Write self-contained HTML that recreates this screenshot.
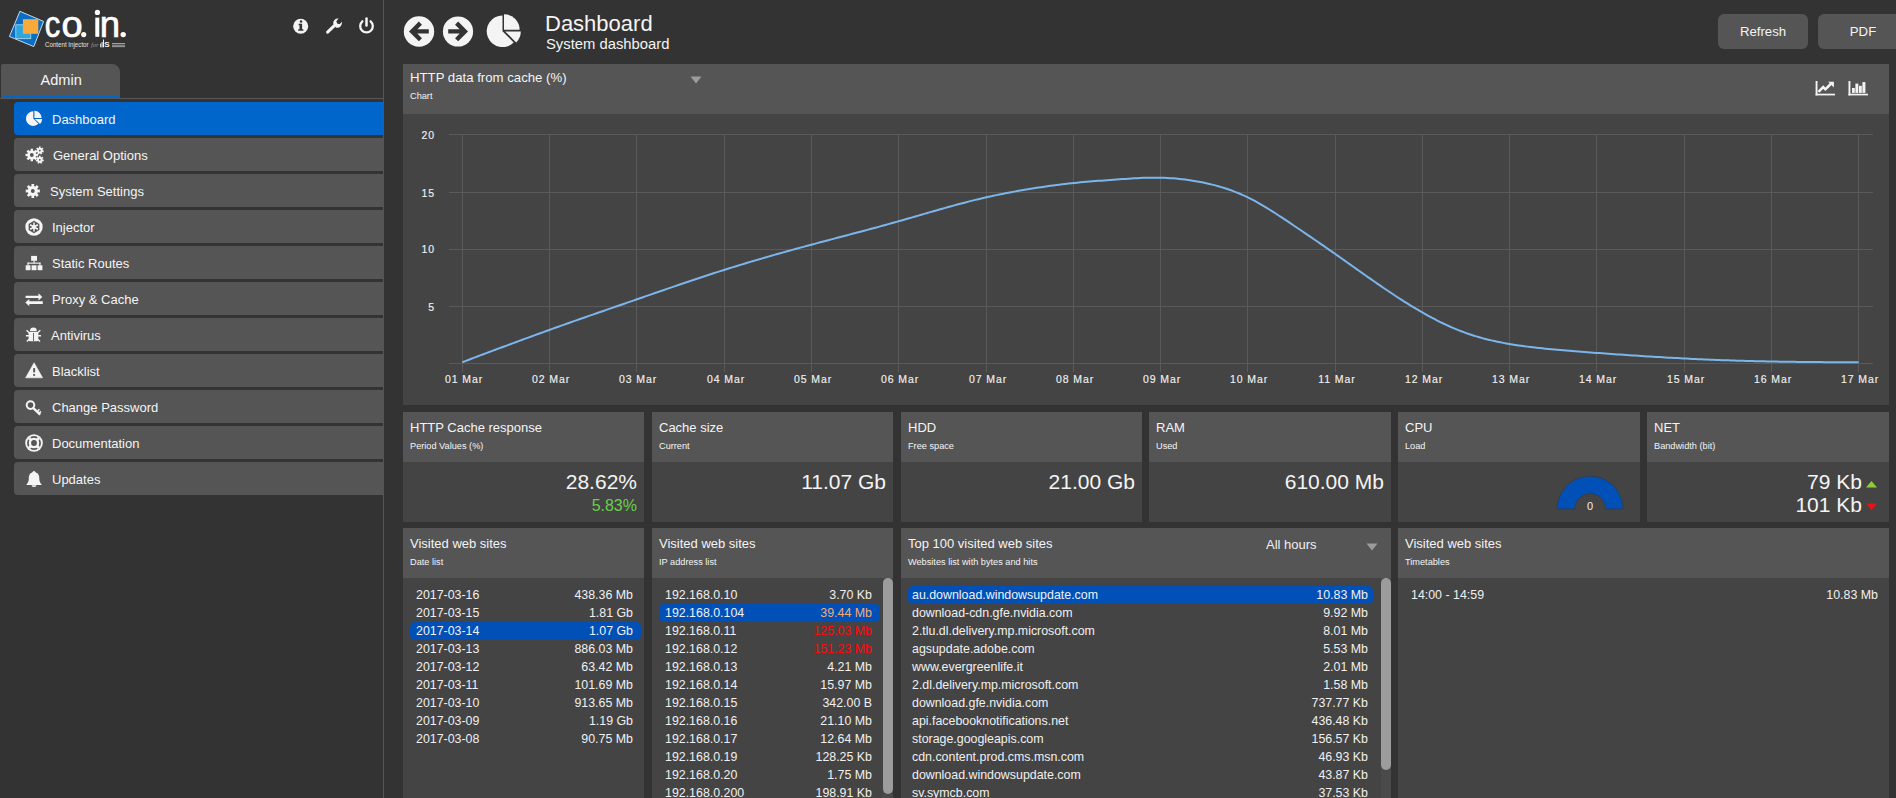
<!DOCTYPE html>
<html><head><meta charset="utf-8">
<style>
*{margin:0;padding:0;box-sizing:border-box}
html,body{width:1896px;height:798px;overflow:hidden;background:#333;font-family:"Liberation Sans",sans-serif;color:#f0f0f0}
.a{position:absolute}
.side{position:absolute;left:0;top:0;width:384px;height:798px;background:#333;border-right:1px solid #555}
.tab{position:absolute;left:1px;top:64px;width:119px;height:34px;background:#555;border-radius:2px 8px 0 0;font-size:14.6px;color:#f4f4f4}
.tab span{position:absolute;left:39.5px;top:8px}
.tab i{position:absolute;left:1px;right:0;bottom:0;height:2px;background:#0066cc;border-radius:2px 2px 0 0}
.hline{position:absolute;left:0;top:98px;width:383px;height:1px;background:#585858}
.mi{position:absolute;left:14px;width:369px;height:33px;background:#555;border-radius:4px 0 0 4px;font-size:13px;color:#f4f4f4}
.mi.on{background:#0066cc}
.mi span{position:absolute;left:38px;top:9.8px;white-space:nowrap}
.mi svg{position:absolute;left:11px;top:8px}
.panel{position:absolute;background:#444}
.ph{position:absolute;left:0;top:0;right:0;background:#555}
.pt{position:absolute;left:7px;top:8px;font-size:13px;color:#f4f4f4;white-space:nowrap}
.ps{position:absolute;left:7px;top:29px;font-size:9.2px;color:#f4f4f4;white-space:nowrap}
.big{position:absolute;right:7px;font-size:21px;color:#f4f4f4;white-space:nowrap}
.row{position:absolute;height:18px;font-size:12.4px;color:#f0f0f0;white-space:nowrap}
.row .l{position:absolute;left:6px;top:2px}
.row .r{position:absolute;right:8px;top:2px}
.row[style*="--x"] .r{right:5px}
.row[style*="--x"] .l{left:4px}
.row.sel{background:#0050b8;border-radius:5px}
.btn{position:absolute;top:14px;height:35px;background:#555;border-radius:6px;font-size:13.2px;color:#f4f4f4}
.btn span{position:absolute;top:10px;left:0;right:0;text-align:center}
.ax{position:absolute;font-size:10.5px;color:#f0f0f0;letter-spacing:0.9px;white-space:nowrap;-webkit-text-stroke:0.15px #f0f0f0}
</style></head><body>

<div class="side">
  <!-- logo -->
  <svg class="a" style="left:0;top:0" width="140" height="60" viewBox="0 0 140 60">
    <defs><clipPath id="sq"><polygon points="19.9,11.3 43.6,21.4 33.8,46.6 9.4,36.5"/></clipPath></defs>
    <polygon points="19.9,11.3 43.6,21.4 33.8,46.6 9.4,36.5" fill="#0a6fc4" stroke="#dfe8f0" stroke-width="0.9"/>
    <g clip-path="url(#sq)">
      <rect x="15.8" y="24.8" width="15" height="13.9" fill="#2ea6dd" stroke="#bfe3f5" stroke-width="0.7"/>
    </g>
    <rect x="22.9" y="19.2" width="15.4" height="14.6" fill="#f9aa3a"/>
    <g font-family="Liberation Sans" font-size="36.5" fill="#fff" stroke="#fff" stroke-width="0.7">
      <text transform="translate(44.8 37) scale(0.85 1)">c</text>
      <text transform="translate(61.4 37) scale(1.04 1)">o</text>
      <text x="99.8" y="37">n</text>
    </g>
    <g fill="#fff"><circle cx="83.7" cy="34.6" r="2.6"/><circle cx="123.2" cy="34.6" r="2.7"/><circle cx="97.4" cy="12.4" r="2.6"/><rect x="95.3" y="17.6" width="4" height="19.2"/></g>
    <text x="45" y="47.3" font-family="Liberation Sans" font-size="6.3" fill="#e4e4e4" textLength="43.6" lengthAdjust="spacingAndGlyphs">Content Injector</text>
    <text x="91" y="47.3" font-family="Liberation Serif" font-style="italic" font-size="6.5" fill="#9a9a9a">for</text>
    <g fill="#f0f0f0"><rect x="100.2" y="43.5" width="1" height="3.8"/><rect x="101.6" y="42" width="1" height="5.3"/><rect x="103" y="39.5" width="1" height="7.8"/></g>
    <text x="104.3" y="47.4" font-family="Liberation Sans" font-weight="bold" font-size="8" fill="#f4f4f4">S</text>
    <g fill="#cfcfcf"><rect x="112" y="43.2" width="13" height="0.7"/><rect x="112" y="44.8" width="13" height="0.7"/><rect x="112" y="46.4" width="13" height="0.7"/></g>
  </svg>
  <!-- top icons -->
  <svg class="a" style="left:280px;top:5px" width="110" height="40" viewBox="280 5 110 40">
    <circle cx="300.7" cy="26.2" r="7.5" fill="#f4f4f4"/>
    <circle cx="301" cy="21.5" r="1.25" fill="#333"/>
    <path d="M298.6 23.7H302.1V29.2H303.4V30.8H298.2V29.2H299.5V25.2H298.6Z" fill="#333"/>
    <path d="M327.6 32.2L334.6 25.4" stroke="#f4f4f4" stroke-width="3" stroke-linecap="round"/>
    <path d="M333.2 23.6A4.6 4.6 0 0 1 338.6 18.6L336.3 21.3 337.2 23.6 339.6 24.3 341.8 21.8A4.6 4.6 0 0 1 335.8 27.4Z" fill="#f4f4f4"/>
    <path d="M362.4 21.3A6.3 6.3 0 1 0 370.6 21.3" fill="none" stroke="#f4f4f4" stroke-width="2.3" stroke-linecap="round"/>
    <path d="M366.5 18.6V25.4" stroke="#f4f4f4" stroke-width="2.5" stroke-linecap="round"/>
  </svg>

  <div class="tab"><span>Admin</span><i></i></div>
  <div class="hline"></div>

  <div class="mi on" style="top:102px"><span>Dashboard</span></div>
  <div class="mi" style="top:138px"><span style="left:39px">General Options</span></div>
  <div class="mi" style="top:174px"><span style="left:36px">System Settings</span></div>
  <div class="mi" style="top:210px"><span>Injector</span></div>
  <div class="mi" style="top:246px"><span>Static Routes</span></div>
  <div class="mi" style="top:282px"><span>Proxy &amp; Cache</span></div>
  <div class="mi" style="top:318px"><span style="left:37px">Antivirus</span></div>
  <div class="mi" style="top:354px"><span>Blacklist</span></div>
  <div class="mi" style="top:390px"><span>Change Password</span></div>
  <div class="mi" style="top:426px"><span>Documentation</span></div>
  <div class="mi" style="top:462px"><span>Updates</span></div>
  <svg class="a" style="left:0;top:0" width="384" height="500" viewBox="0 0 384 500"><path d="M33.30 118.60 V111.30 A7.30 7.30 0 1 0 38.46 123.76 Z M34.40 118.05 V110.75 A7.30 7.30 0 0 1 41.70 118.05 Z M34.84 118.93 H42.14 A7.30 7.30 0 0 1 40.00 124.09 Z" fill="#f4f4f4"/><path fill-rule="evenodd" d="M30.04 150.75 L30.69 150.54 L30.55 148.72 L33.05 148.72 L32.91 150.54 L33.56 150.75 L34.17 151.06 L35.36 149.68 L37.12 151.44 L35.74 152.63 L36.05 153.24 L36.26 153.89 L38.08 153.75 L38.08 156.25 L36.26 156.11 L36.05 156.76 L35.74 157.37 L37.12 158.56 L35.36 160.32 L34.17 158.94 L33.56 159.25 L32.91 159.46 L33.05 161.28 L30.55 161.28 L30.69 159.46 L30.04 159.25 L29.43 158.94 L28.24 160.32 L26.48 158.56 L27.86 157.37 L27.55 156.76 L27.34 156.11 L25.52 156.25 L25.52 153.75 L27.34 153.89 L27.55 153.24 L27.86 152.63 L26.48 151.44 L28.24 149.68 L29.43 151.06Z M29.90 155.00 a1.90 1.90 0 1 0 3.80 0 a1.90 1.90 0 1 0 -3.80 0Z" fill="#f4f4f4"/><path fill-rule="evenodd" d="M38.54 147.99 L39.00 147.81 L38.89 146.60 L40.71 146.60 L40.60 147.81 L41.06 147.99 L41.48 148.24 L42.36 147.39 L43.49 148.82 L42.48 149.48 L42.63 149.95 L42.70 150.44 L43.90 150.60 L43.49 152.38 L42.34 152.00 L42.07 152.41 L41.73 152.77 L42.36 153.81 L40.71 154.60 L40.29 153.46 L39.80 153.50 L39.31 153.46 L38.89 154.60 L37.24 153.81 L37.87 152.77 L37.53 152.41 L37.26 152.00 L36.11 152.38 L35.70 150.60 L36.90 150.44 L36.97 149.95 L37.12 149.48 L36.11 148.82 L37.24 147.39 L38.12 148.24Z M38.90 150.60 a0.90 0.90 0 1 0 1.80 0 a0.90 0.90 0 1 0 -1.80 0Z" fill="#f4f4f4"/><path fill-rule="evenodd" d="M38.54 157.19 L39.00 157.01 L38.89 155.80 L40.71 155.80 L40.60 157.01 L41.06 157.19 L41.48 157.44 L42.36 156.59 L43.49 158.02 L42.48 158.68 L42.63 159.15 L42.70 159.64 L43.90 159.80 L43.49 161.58 L42.34 161.20 L42.07 161.61 L41.73 161.97 L42.36 163.01 L40.71 163.80 L40.29 162.66 L39.80 162.70 L39.31 162.66 L38.89 163.80 L37.24 163.01 L37.87 161.97 L37.53 161.61 L37.26 161.20 L36.11 161.58 L35.70 159.80 L36.90 159.64 L36.97 159.15 L37.12 158.68 L36.11 158.02 L37.24 156.59 L38.12 157.44Z M38.90 159.80 a0.90 0.90 0 1 0 1.80 0 a0.90 0.90 0 1 0 -1.80 0Z" fill="#f4f4f4"/><path fill-rule="evenodd" d="M30.81 186.20 L31.55 185.95 L31.40 183.94 L34.20 183.94 L34.05 185.95 L34.79 186.20 L35.48 186.55 L36.80 185.01 L38.79 187.00 L37.25 188.32 L37.60 189.01 L37.85 189.75 L39.86 189.60 L39.86 192.40 L37.85 192.25 L37.60 192.99 L37.25 193.68 L38.79 195.00 L36.80 196.99 L35.48 195.45 L34.79 195.80 L34.05 196.05 L34.20 198.06 L31.40 198.06 L31.55 196.05 L30.81 195.80 L30.12 195.45 L28.80 196.99 L26.81 195.00 L28.35 193.68 L28.00 192.99 L27.75 192.25 L25.74 192.40 L25.74 189.60 L27.75 189.75 L28.00 189.01 L28.35 188.32 L26.81 187.00 L28.80 185.01 L30.12 186.55Z M30.90 191.00 a1.90 1.90 0 1 0 3.80 0 a1.90 1.90 0 1 0 -3.80 0Z" fill="#f4f4f4"/><circle cx="34" cy="227" r="8.7" fill="#f4f4f4"/><polygon points="34.00,233.20 28.63,230.10 28.63,223.90 34.00,220.80 39.37,223.90 39.37,230.10" fill="#555"/><g stroke="#f4f4f4" stroke-width="1.5"><path d="M34 222.50v9M30.10 224.75l7.8 4.5M30.10 229.25l7.8 -4.5"/></g><circle cx="34" cy="227" r="1.9" fill="#f4f4f4"/><g fill="#f4f4f4"><rect x="31.1" y="255.9" width="5.9" height="4.9"/><rect x="33.5" y="260.5" width="1.1" height="3"/><rect x="27.5" y="262.6" width="13" height="1.1"/><rect x="27.5" y="262.6" width="1.1" height="3"/><rect x="39.4" y="262.6" width="1.1" height="3"/><rect x="25.7" y="265.3" width="4.8" height="4.9"/><rect x="31.6" y="265.3" width="4.9" height="4.9"/><rect x="37.6" y="265.3" width="4.8" height="4.9"/></g><g fill="#f4f4f4"><path d="M25.6 295.8H38.5V293.3L42.3 296.9 38.5 300.5V298.1H25.6z"/><path d="M42.8 301.3H29.3V298.9L25.3 302.6 29.3 306.2V303.9H42.8z"/></g><g fill="#f4f4f4"><path d="M30 331A3.4 3.4 0 0 1 36.8 331z"/><rect x="28.6" y="331.8" width="9.7" height="9.5" rx="1.5"/></g><rect x="33" y="333" width="0.9" height="8" fill="#555"/><g stroke="#f4f4f4" stroke-width="1.4" fill="none"><path d="M26.5 330.2L29.5 333M40.3 330.2L37.3 333M25.9 335.8H29M41 335.8H37.9M26.8 341.5L29.5 339M40 341.5L37.3 339"/></g><path d="M34.1 362.8L42.6 377.8H25.6z" fill="#f4f4f4" stroke="#f4f4f4" stroke-width="0.6" stroke-linejoin="round"/><rect x="33.2" y="368.1" width="1.9" height="4.3" fill="#555"/><rect x="33.2" y="374" width="1.9" height="1.8" fill="#555"/><circle cx="30.5" cy="405.1" r="3.8" fill="none" stroke="#f4f4f4" stroke-width="2"/><path d="M32.8 407.6L40.2 414.6" stroke="#f4f4f4" stroke-width="2.4"/><path d="M37.2 411.5l2.2-2.2M39 413.3l1.9-1.9" stroke="#f4f4f4" stroke-width="1.6"/><circle cx="34" cy="443" r="8.8" fill="#f4f4f4"/><circle cx="34" cy="443" r="6.1" fill="none" stroke="#555" stroke-width="1.7"/><path d="M29 438l10 10M39 438l-10 10" stroke="#f4f4f4" stroke-width="3"/><circle cx="34" cy="443" r="2.9" fill="#555"/><path d="M34 470.9C35.2 470.9 35.6 472 35.9 472.6 38.5 473.4 39.3 475.6 39.3 478.5 39.3 481.5 40.2 483 41.9 484.9H26.2C27.9 483 28.8 481.5 28.8 478.5 28.8 475.6 29.6 473.4 32.1 472.6 32.4 472 32.8 470.9 34 470.9z" fill="#f4f4f4"/><path d="M31.5 485.2A2.6 2.6 0 0 0 36.5 485.2z" fill="#f4f4f4"/></svg>
</div>

<!-- MAIN -->
<div id="main">
<!-- header -->
<svg class="a" style="left:400px;top:10px" width="130" height="42" viewBox="400 10 130 42">
<circle cx="419" cy="31.5" r="15.2" fill="#f4f4f4"/>
<path d="M420.4 23.1L412.1 31.4 420.4 39.7M412.5 31.4H428.8" fill="none" stroke="#333" stroke-width="4.4" stroke-linejoin="miter"/>
<circle cx="458" cy="31.5" r="15.1" fill="#f4f4f4"/>
<path d="M456.6 23.1L464.9 31.4 456.6 39.7M464.5 31.4H448.2" fill="none" stroke="#333" stroke-width="4.4" stroke-linejoin="miter"/>
<path d="M502.50 31.30 V15.50 A15.80 15.80 0 1 0 513.67 42.47 Z" fill="#f4f4f4"/><path d="M504 29.8 V14.2 A15.6 15.6 0 0 1 519.6 29.8 Z" fill="#f4f4f4"/><path d="M505.2 31.4 H520.8 A15.6 15.6 0 0 1 516.2 42.4 Z" fill="#f4f4f4"/>
</svg>
<div class="a" style="left:545px;top:11px;font-size:22px;color:#f4f4f4">Dashboard</div>
<div class="a" style="left:546px;top:35.7px;font-size:14.8px;color:#f4f4f4">System dashboard</div>
<div class="btn" style="left:1718px;width:90px"><span>Refresh</span></div>
<div class="btn" style="left:1818px;width:90px"><span>PDF</span></div>

<!-- chart panel -->
<div class="panel" style="left:403px;top:64px;width:486px;height:341px;width:1486px">
  <div class="ph" style="height:50px"></div>
  <div class="pt" style="top:5.5px;font-size:13.2px">HTTP data from cache (%)</div>
  <div class="ps" style="top:27px">Chart</div>
  <svg class="a" style="left:287px;top:11.8px" width="12" height="8" viewBox="0 0 12 8"><path d="M0.5 .5h11L6 7.5z" fill="#9c9c9c"/></svg>
  <svg class="a" style="left:0;top:0" width="1486" height="50" viewBox="0 0 1486 50"><g fill="#f4f4f4">
<rect x="1412.6" y="17" width="1.9" height="14.4"/><rect x="1412.6" y="29.7" width="19.4" height="1.7"/>
<path d="M1415.4 27.9L1420.2 23.1 1422.4 25.3 1427.7 20" fill="none" stroke="#f4f4f4" stroke-width="2.5"/>
<path d="M1425.2 17.8H1430.9V23.5Z"/>
<rect x="1445.5" y="17" width="1.9" height="14.4"/><rect x="1445.5" y="29.7" width="19.5" height="1.7"/>
<rect x="1449" y="24" width="2.8" height="4.9"/><rect x="1452.4" y="19.6" width="2.9" height="9.3"/><rect x="1456" y="21.8" width="2.8" height="7.1"/><rect x="1459.4" y="18.1" width="3" height="10.8"/>
</g></svg>
</div>
<svg class="a" style="left:0;top:0" width="1896" height="420" viewBox="0 0 1896 420">
  <g stroke="#5a5a5a" stroke-width="1" fill="none"><path d="M449 134.5H1873" /><path d="M449 192.5H1873" /><path d="M449 249.5H1873" /><path d="M449 306.5H1873" /><path d="M449 363.5H1873" /><path d="M462.5 134V372" /><path d="M549.5 134V372" /><path d="M636.5 134V372" /><path d="M724.5 134V372" /><path d="M811.5 134V372" /><path d="M898.5 134V372" /><path d="M986.5 134V372" /><path d="M1073.5 134V372" /><path d="M1160.5 134V372" /><path d="M1247.5 134V372" /><path d="M1335.5 134V372" /><path d="M1422.5 134V372" /><path d="M1509.5 134V372" /><path d="M1596.5 134V372" /><path d="M1684.5 134V372" /><path d="M1771.5 134V372" /><path d="M1858.5 134V372" /></g>
  <path d="M462.3 362.20 L465.3 361.07 L468.3 359.94 L471.3 358.81 L474.3 357.68 L477.3 356.56 L480.3 355.43 L483.3 354.30 L486.3 353.17 L489.3 352.05 L492.3 350.93 L495.3 349.80 L498.3 348.68 L501.3 347.56 L504.3 346.44 L507.3 345.33 L510.3 344.21 L513.3 343.10 L516.3 341.99 L519.3 340.88 L522.3 339.77 L525.3 338.67 L528.3 337.57 L531.3 336.47 L534.3 335.37 L537.3 334.28 L540.3 333.19 L543.3 332.10 L546.3 331.02 L549.3 329.94 L552.3 328.86 L555.3 327.79 L558.3 326.71 L561.3 325.65 L564.3 324.58 L567.3 323.52 L570.3 322.46 L573.3 321.41 L576.3 320.35 L579.3 319.30 L582.3 318.25 L585.3 317.20 L588.3 316.16 L591.3 315.11 L594.3 314.07 L597.3 313.03 L600.3 311.99 L603.3 310.95 L606.3 309.91 L609.3 308.87 L612.3 307.83 L615.3 306.80 L618.3 305.76 L621.3 304.72 L624.3 303.69 L627.3 302.65 L630.3 301.61 L633.3 300.58 L636.3 299.54 L639.3 298.50 L642.3 297.46 L645.3 296.42 L648.3 295.38 L651.3 294.34 L654.3 293.31 L657.3 292.27 L660.3 291.23 L663.3 290.20 L666.3 289.17 L669.3 288.13 L672.3 287.10 L675.3 286.08 L678.3 285.05 L681.3 284.03 L684.3 283.01 L687.3 282.00 L690.3 280.99 L693.3 279.98 L696.3 278.98 L699.3 277.98 L702.3 276.98 L705.3 276.00 L708.3 275.01 L711.3 274.03 L714.3 273.06 L717.3 272.09 L720.3 271.13 L723.3 270.18 L726.3 269.23 L729.3 268.29 L732.3 267.36 L735.3 266.43 L738.3 265.51 L741.3 264.60 L744.3 263.69 L747.3 262.79 L750.3 261.89 L753.3 261.00 L756.3 260.11 L759.3 259.23 L762.3 258.36 L765.3 257.49 L768.3 256.62 L771.3 255.77 L774.3 254.91 L777.3 254.06 L780.3 253.22 L783.3 252.37 L786.3 251.54 L789.3 250.70 L792.3 249.87 L795.3 249.05 L798.3 248.23 L801.3 247.41 L804.3 246.60 L807.3 245.78 L810.3 244.98 L813.3 244.17 L816.3 243.37 L819.3 242.57 L822.3 241.77 L825.3 240.97 L828.3 240.18 L831.3 239.39 L834.3 238.60 L837.3 237.80 L840.3 237.01 L843.3 236.22 L846.3 235.43 L849.3 234.64 L852.3 233.84 L855.3 233.05 L858.3 232.25 L861.3 231.46 L864.3 230.66 L867.3 229.86 L870.3 229.05 L873.3 228.24 L876.3 227.43 L879.3 226.62 L882.3 225.80 L885.3 224.98 L888.3 224.15 L891.3 223.32 L894.3 222.48 L897.3 221.64 L900.3 220.79 L903.3 219.94 L906.3 219.08 L909.3 218.22 L912.3 217.35 L915.3 216.48 L918.3 215.62 L921.3 214.75 L924.3 213.88 L927.3 213.01 L930.3 212.14 L933.3 211.28 L936.3 210.42 L939.3 209.56 L942.3 208.71 L945.3 207.86 L948.3 207.03 L951.3 206.19 L954.3 205.37 L957.3 204.55 L960.3 203.75 L963.3 202.95 L966.3 202.17 L969.3 201.40 L972.3 200.64 L975.3 199.90 L978.3 199.17 L981.3 198.45 L984.3 197.75 L987.3 197.07 L990.3 196.40 L993.3 195.76 L996.3 195.12 L999.3 194.50 L1002.3 193.90 L1005.3 193.31 L1008.3 192.73 L1011.3 192.17 L1014.3 191.62 L1017.3 191.08 L1020.3 190.55 L1023.3 190.04 L1026.3 189.53 L1029.3 189.03 L1032.3 188.55 L1035.3 188.07 L1038.3 187.60 L1041.3 187.14 L1044.3 186.70 L1047.3 186.26 L1050.3 185.84 L1053.3 185.43 L1056.3 185.03 L1059.3 184.64 L1062.3 184.27 L1065.3 183.91 L1068.3 183.57 L1071.3 183.24 L1074.3 182.93 L1077.3 182.63 L1080.3 182.35 L1083.3 182.08 L1086.3 181.82 L1089.3 181.57 L1092.3 181.32 L1095.3 181.09 L1098.3 180.86 L1101.3 180.64 L1104.3 180.42 L1107.3 180.20 L1110.3 179.98 L1113.3 179.76 L1116.3 179.53 L1119.3 179.31 L1122.3 179.09 L1125.3 178.88 L1128.3 178.68 L1131.3 178.48 L1134.3 178.31 L1137.3 178.14 L1140.3 178.00 L1143.3 177.87 L1146.3 177.78 L1149.3 177.70 L1152.3 177.66 L1155.3 177.65 L1158.3 177.67 L1161.3 177.73 L1164.3 177.82 L1167.3 177.96 L1170.3 178.13 L1173.3 178.34 L1176.3 178.59 L1179.3 178.88 L1182.3 179.21 L1185.3 179.57 L1188.3 179.98 L1191.3 180.42 L1194.3 180.90 L1197.3 181.42 L1200.3 181.98 L1203.3 182.58 L1206.3 183.22 L1209.3 183.90 L1212.3 184.63 L1215.3 185.40 L1218.3 186.22 L1221.3 187.09 L1224.3 188.02 L1227.3 189.00 L1230.3 190.04 L1233.3 191.14 L1236.3 192.31 L1239.3 193.54 L1242.3 194.84 L1245.3 196.20 L1248.3 197.64 L1251.3 199.15 L1254.3 200.73 L1257.3 202.38 L1260.3 204.08 L1263.3 205.83 L1266.3 207.64 L1269.3 209.48 L1272.3 211.37 L1275.3 213.28 L1278.3 215.23 L1281.3 217.20 L1284.3 219.19 L1287.3 221.19 L1290.3 223.20 L1293.3 225.22 L1296.3 227.24 L1299.3 229.26 L1302.3 231.29 L1305.3 233.33 L1308.3 235.37 L1311.3 237.41 L1314.3 239.47 L1317.3 241.52 L1320.3 243.59 L1323.3 245.66 L1326.3 247.74 L1329.3 249.82 L1332.3 251.92 L1335.3 254.02 L1338.3 256.13 L1341.3 258.24 L1344.3 260.36 L1347.3 262.49 L1350.3 264.62 L1353.3 266.74 L1356.3 268.87 L1359.3 270.99 L1362.3 273.11 L1365.3 275.23 L1368.3 277.34 L1371.3 279.44 L1374.3 281.53 L1377.3 283.61 L1380.3 285.67 L1383.3 287.73 L1386.3 289.76 L1389.3 291.78 L1392.3 293.78 L1395.3 295.76 L1398.3 297.72 L1401.3 299.66 L1404.3 301.57 L1407.3 303.45 L1410.3 305.31 L1413.3 307.14 L1416.3 308.93 L1419.3 310.70 L1422.3 312.43 L1425.3 314.12 L1428.3 315.78 L1431.3 317.41 L1434.3 318.99 L1437.3 320.53 L1440.3 322.03 L1443.3 323.49 L1446.3 324.91 L1449.3 326.28 L1452.3 327.60 L1455.3 328.88 L1458.3 330.11 L1461.3 331.28 L1464.3 332.41 L1467.3 333.48 L1470.3 334.50 L1473.3 335.48 L1476.3 336.40 L1479.3 337.28 L1482.3 338.12 L1485.3 338.91 L1488.3 339.66 L1491.3 340.38 L1494.3 341.06 L1497.3 341.70 L1500.3 342.31 L1503.3 342.89 L1506.3 343.44 L1509.3 343.97 L1512.3 344.47 L1515.3 344.94 L1518.3 345.39 L1521.3 345.82 L1524.3 346.23 L1527.3 346.63 L1530.3 347.00 L1533.3 347.36 L1536.3 347.70 L1539.3 348.03 L1542.3 348.34 L1545.3 348.65 L1548.3 348.94 L1551.3 349.22 L1554.3 349.50 L1557.3 349.76 L1560.3 350.03 L1563.3 350.28 L1566.3 350.54 L1569.3 350.79 L1572.3 351.03 L1575.3 351.27 L1578.3 351.51 L1581.3 351.75 L1584.3 351.98 L1587.3 352.21 L1590.3 352.44 L1593.3 352.66 L1596.3 352.89 L1599.3 353.11 L1602.3 353.33 L1605.3 353.55 L1608.3 353.76 L1611.3 353.98 L1614.3 354.19 L1617.3 354.40 L1620.3 354.61 L1623.3 354.82 L1626.3 355.02 L1629.3 355.22 L1632.3 355.42 L1635.3 355.62 L1638.3 355.82 L1641.3 356.01 L1644.3 356.20 L1647.3 356.39 L1650.3 356.58 L1653.3 356.76 L1656.3 356.94 L1659.3 357.12 L1662.3 357.29 L1665.3 357.47 L1668.3 357.63 L1671.3 357.80 L1674.3 357.96 L1677.3 358.12 L1680.3 358.28 L1683.3 358.43 L1686.3 358.58 L1689.3 358.73 L1692.3 358.88 L1695.3 359.02 L1698.3 359.15 L1701.3 359.29 L1704.3 359.42 L1707.3 359.55 L1710.3 359.67 L1713.3 359.79 L1716.3 359.91 L1719.3 360.02 L1722.3 360.14 L1725.3 360.24 L1728.3 360.35 L1731.3 360.45 L1734.3 360.55 L1737.3 360.65 L1740.3 360.74 L1743.3 360.83 L1746.3 360.91 L1749.3 360.99 L1752.3 361.07 L1755.3 361.15 L1758.3 361.22 L1761.3 361.29 L1764.3 361.36 L1767.3 361.42 L1770.3 361.48 L1773.3 361.54 L1776.3 361.60 L1779.3 361.65 L1782.3 361.70 L1785.3 361.74 L1788.3 361.78 L1791.3 361.82 L1794.3 361.86 L1797.3 361.90 L1800.3 361.93 L1803.3 361.96 L1806.3 361.99 L1809.3 362.02 L1812.3 362.05 L1815.3 362.07 L1818.3 362.09 L1821.3 362.11 L1824.3 362.13 L1827.3 362.15 L1830.3 362.17 L1833.3 362.19 L1836.3 362.20 L1839.3 362.22 L1842.3 362.23 L1845.3 362.24 L1848.3 362.26 L1851.3 362.27 L1854.3 362.28 L1857.3 362.29 L1858.7 362.30" fill="none" stroke="#7cb5ec" stroke-width="2"/>
</svg>
<div class="ax" style="left:434.0px;top:373px;width:60px;text-align:center">01 Mar</div><div class="ax" style="left:521.0px;top:373px;width:60px;text-align:center">02 Mar</div><div class="ax" style="left:608.0px;top:373px;width:60px;text-align:center">03 Mar</div><div class="ax" style="left:696.0px;top:373px;width:60px;text-align:center">04 Mar</div><div class="ax" style="left:783.0px;top:373px;width:60px;text-align:center">05 Mar</div><div class="ax" style="left:870.0px;top:373px;width:60px;text-align:center">06 Mar</div><div class="ax" style="left:958.0px;top:373px;width:60px;text-align:center">07 Mar</div><div class="ax" style="left:1045.0px;top:373px;width:60px;text-align:center">08 Mar</div><div class="ax" style="left:1132.0px;top:373px;width:60px;text-align:center">09 Mar</div><div class="ax" style="left:1219.0px;top:373px;width:60px;text-align:center">10 Mar</div><div class="ax" style="left:1307.0px;top:373px;width:60px;text-align:center">11 Mar</div><div class="ax" style="left:1394.0px;top:373px;width:60px;text-align:center">12 Mar</div><div class="ax" style="left:1481.0px;top:373px;width:60px;text-align:center">13 Mar</div><div class="ax" style="left:1568.0px;top:373px;width:60px;text-align:center">14 Mar</div><div class="ax" style="left:1656.0px;top:373px;width:60px;text-align:center">15 Mar</div><div class="ax" style="left:1743.0px;top:373px;width:60px;text-align:center">16 Mar</div><div class="ax" style="left:1830.0px;top:373px;width:60px;text-align:center">17 Mar</div><div class="ax" style="left:400px;top:129.0px;width:35px;text-align:right">20</div><div class="ax" style="left:400px;top:187.0px;width:35px;text-align:right">15</div><div class="ax" style="left:400px;top:243.0px;width:35px;text-align:right">10</div><div class="ax" style="left:400px;top:301.0px;width:35px;text-align:right">5</div>

<div class="panel" style="left:403px;top:412px;width:241px;height:110px"><div class="ph" style="height:50px"></div><div class="pt">HTTP Cache response</div><div class="ps">Period Values (%)</div><div class="big" style="top:58px">28.62%</div><div class="big" style="top:84.5px;font-size:16px;color:#6ad04a">5.83%</div></div>
<div class="panel" style="left:652px;top:412px;width:241px;height:110px"><div class="ph" style="height:50px"></div><div class="pt">Cache size</div><div class="ps">Current</div><div class="big" style="top:58px">11.07 Gb</div></div>
<div class="panel" style="left:901px;top:412px;width:241px;height:110px"><div class="ph" style="height:50px"></div><div class="pt">HDD</div><div class="ps">Free space</div><div class="big" style="top:58px">21.00 Gb</div></div>
<div class="panel" style="left:1149px;top:412px;width:242px;height:110px"><div class="ph" style="height:50px"></div><div class="pt">RAM</div><div class="ps">Used</div><div class="big" style="top:58px">610.00 Mb</div></div>
<div class="panel" style="left:1398px;top:412px;width:242px;height:110px"><div class="ph" style="height:50px"></div><div class="pt">CPU</div><div class="ps">Load</div><svg class="a" style="left:158px;top:63px" width="68" height="35" viewBox="0 0 68 35"><path d="M1 34A33 33 0 0 1 67 34H49.3A15.3 15.3 0 0 0 18.7 34z" fill="#0050b8" stroke="#3a3a3a" stroke-width="0.8"/></svg><div class="a" style="left:186px;top:88px;font-size:11px;width:12px;text-align:center">0</div></div>
<div class="panel" style="left:1647px;top:412px;width:242px;height:110px"><div class="ph" style="height:50px"></div><div class="pt">NET</div><div class="ps">Bandwidth (bit)</div><div class="big" style="top:58px;right:27px">79 Kb</div><div class="big" style="top:80.5px;right:27px">101 Kb</div><svg class="a" style="left:219px;top:69px" width="11" height="7" viewBox="0 0 11 7"><path d="M5.5 0L11 6.5H0z" fill="#8fcc3a"/></svg><svg class="a" style="left:219px;top:91px" width="11" height="7" viewBox="0 0 11 7"><path d="M0 .5h11L5.5 7z" fill="#ee1111"/></svg></div>
<div class="panel" style="left:403px;top:528px;width:241px;height:280px"><div class="ph" style="height:50px"></div><div class="pt">Visited web sites</div><div class="ps">Date list</div><div class="row" style="left:7px;width:231px;top:58px"><span class="l">2017-03-16</span><span class="r">438.36 Mb</span></div><div class="row" style="left:7px;width:231px;top:76px"><span class="l">2017-03-15</span><span class="r">1.81 Gb</span></div><div class="row sel" style="left:7px;width:231px;top:94px"><span class="l">2017-03-14</span><span class="r">1.07 Gb</span></div><div class="row" style="left:7px;width:231px;top:112px"><span class="l">2017-03-13</span><span class="r">886.03 Mb</span></div><div class="row" style="left:7px;width:231px;top:130px"><span class="l">2017-03-12</span><span class="r">63.42 Mb</span></div><div class="row" style="left:7px;width:231px;top:148px"><span class="l">2017-03-11</span><span class="r">101.69 Mb</span></div><div class="row" style="left:7px;width:231px;top:166px"><span class="l">2017-03-10</span><span class="r">913.65 Mb</span></div><div class="row" style="left:7px;width:231px;top:184px"><span class="l">2017-03-09</span><span class="r">1.19 Gb</span></div><div class="row" style="left:7px;width:231px;top:202px"><span class="l">2017-03-08</span><span class="r">90.75 Mb</span></div></div>
<div class="panel" style="left:652px;top:528px;width:241px;height:280px"><div class="ph" style="height:50px"></div><div class="pt">Visited web sites</div><div class="ps">IP address list</div><div class="row" style="left:7px;width:221px;top:58px"><span class="l">192.168.0.10</span><span class="r">3.70 Kb</span></div><div class="row sel" style="left:7px;width:221px;top:76px"><span class="l">192.168.0.104</span><span class="r" style=color:#f2ac74>39.44 Mb</span></div><div class="row" style="left:7px;width:221px;top:94px"><span class="l">192.168.0.11</span><span class="r" style=color:#ff0a0a>125.03 Mb</span></div><div class="row" style="left:7px;width:221px;top:112px"><span class="l">192.168.0.12</span><span class="r" style=color:#ff0a0a>151.23 Mb</span></div><div class="row" style="left:7px;width:221px;top:130px"><span class="l">192.168.0.13</span><span class="r">4.21 Mb</span></div><div class="row" style="left:7px;width:221px;top:148px"><span class="l">192.168.0.14</span><span class="r">15.97 Mb</span></div><div class="row" style="left:7px;width:221px;top:166px"><span class="l">192.168.0.15</span><span class="r">342.00 B</span></div><div class="row" style="left:7px;width:221px;top:184px"><span class="l">192.168.0.16</span><span class="r">21.10 Mb</span></div><div class="row" style="left:7px;width:221px;top:202px"><span class="l">192.168.0.17</span><span class="r">12.64 Mb</span></div><div class="row" style="left:7px;width:221px;top:220px"><span class="l">192.168.0.19</span><span class="r">128.25 Kb</span></div><div class="row" style="left:7px;width:221px;top:238px"><span class="l">192.168.0.20</span><span class="r">1.75 Mb</span></div><div class="row" style="left:7px;width:221px;top:256px"><span class="l">192.168.0.200</span><span class="r">198.91 Kb</span></div><div class="a" style="left:231px;top:50px;width:10px;height:230px;background:#4a4a4a"></div><div class="a" style="left:231px;top:50px;width:10px;height:216px;background:#9c9c9c;border-radius:5px"></div></div>
<div class="panel" style="left:901px;top:528px;width:490px;height:280px"><div class="ph" style="height:50px"></div><div class="pt">Top 100 visited web sites</div><div class="ps">Websites list with bytes and hits</div><div class="row sel" style="--x:0;left:7px;width:465px;top:58px"><span class="l">au.download.windowsupdate.com</span><span class="r">10.83 Mb</span></div><div class="row" style="--x:0;left:7px;width:465px;top:76px"><span class="l">download-cdn.gfe.nvidia.com</span><span class="r">9.92 Mb</span></div><div class="row" style="--x:0;left:7px;width:465px;top:94px"><span class="l">2.tlu.dl.delivery.mp.microsoft.com</span><span class="r">8.01 Mb</span></div><div class="row" style="--x:0;left:7px;width:465px;top:112px"><span class="l">agsupdate.adobe.com</span><span class="r">5.53 Mb</span></div><div class="row" style="--x:0;left:7px;width:465px;top:130px"><span class="l">www.evergreenlife.it</span><span class="r">2.01 Mb</span></div><div class="row" style="--x:0;left:7px;width:465px;top:148px"><span class="l">2.dl.delivery.mp.microsoft.com</span><span class="r">1.58 Mb</span></div><div class="row" style="--x:0;left:7px;width:465px;top:166px"><span class="l">download.gfe.nvidia.com</span><span class="r">737.77 Kb</span></div><div class="row" style="--x:0;left:7px;width:465px;top:184px"><span class="l">api.facebooknotifications.net</span><span class="r">436.48 Kb</span></div><div class="row" style="--x:0;left:7px;width:465px;top:202px"><span class="l">storage.googleapis.com</span><span class="r">156.57 Kb</span></div><div class="row" style="--x:0;left:7px;width:465px;top:220px"><span class="l">cdn.content.prod.cms.msn.com</span><span class="r">46.93 Kb</span></div><div class="row" style="--x:0;left:7px;width:465px;top:238px"><span class="l">download.windowsupdate.com</span><span class="r">43.87 Kb</span></div><div class="row" style="--x:0;left:7px;width:465px;top:256px"><span class="l">sv.symcb.com</span><span class="r">37.53 Kb</span></div><div class="a" style="left:480px;top:50px;width:10px;height:230px;background:#4a4a4a"></div><div class="a" style="left:480px;top:50px;width:10px;height:192px;background:#9c9c9c;border-radius:5px"></div><div class="a" style="left:365px;top:9px;font-size:13px">All hours</div><svg class="a" style="left:465px;top:14.5px" width="12" height="8" viewBox="0 0 12 8"><path d="M0.5 .5h11L6 7.5z" fill="#9c9c9c"/></svg></div>
<div class="panel" style="left:1398px;top:528px;width:491px;height:280px"><div class="ph" style="height:50px"></div><div class="pt">Visited web sites</div><div class="ps">Timetables</div><div class="row" style="left:7px;width:481px;top:58px"><span class="l">14:00 - 14:59</span><span class="r">10.83 Mb</span></div></div>

</div>
</body></html>
